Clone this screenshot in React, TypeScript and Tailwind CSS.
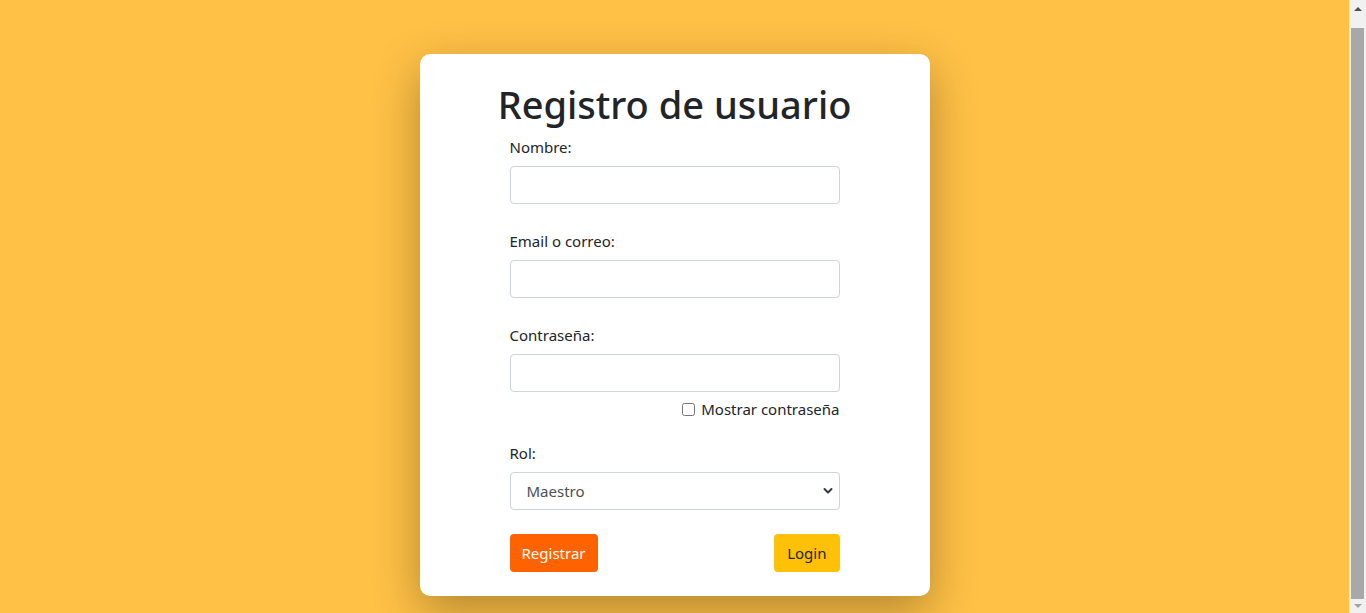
import React, { useState } from 'react';

export default function App() {
  const [showPass, setShowPass] = useState(false);

  return (
    <div className="flex h-screen overflow-hidden bg-[#ffc146] font-['Noto_Sans',sans-serif] text-[#212529]">
      <main className="flex-1 overflow-hidden pt-[54px] pb-[17px]">
        <div className="mx-auto w-[510px] rounded-[10px] bg-white px-[90px] pt-[26px] pb-6 shadow-[0_16px_48px_rgba(0,0,0,0.3)]">
          {/* Title */}
          <h1 className="text-center text-[38px] font-medium leading-[48px] whitespace-nowrap -mx-10">
            Registro de usuario
          </h1>

          <form className="mt-[7px]" onSubmit={(e) => e.preventDefault()}>
            <div className="mb-[25px]">
              <label className="block mb-[7px] text-[15px] leading-6">Nombre:</label>
              <input
                type="text"
                className="block w-full h-[38px] rounded-[4px] border border-[#ced4da] px-3 outline-none"
              />
            </div>

            <div className="mb-[25px]">
              <label className="block mb-[7px] text-[15px] leading-6">Email o correo:</label>
              <input
                type="email"
                className="block w-full h-[38px] rounded-[4px] border border-[#ced4da] px-3 outline-none"
              />
            </div>

            <div className="mb-5">
              <label className="block mb-[7px] text-[15px] leading-6">Contraseña:</label>
              <input
                type={showPass ? 'text' : 'password'}
                className="block w-full h-[38px] rounded-[4px] border border-[#ced4da] px-3 outline-none"
              />
              <div className="mt-[5px] flex justify-end">
                <label className="flex items-center gap-[6px] text-[15px] leading-6">
                  <input
                    type="checkbox"
                    checked={showPass}
                    onChange={() => setShowPass(!showPass)}
                    className="h-[13px] w-[13px]"
                  />
                  Mostrar contraseña
                </label>
              </div>
            </div>

            <div className="mb-6">
              <label className="block mb-[7px] text-[15px] leading-6">Rol:</label>
              <div className="relative">
                <select className="block w-full h-[38px] appearance-none rounded-[4px] border border-[#ced4da] bg-white pl-4 pr-9 text-[15px] text-[#495057] outline-none">
                  <option>Maestro</option>
                  <option>Alumno</option>
                </select>
                <svg
                  className="pointer-events-none absolute right-[7px] top-[15px]"
                  width="10"
                  height="8"
                  viewBox="0 0 10 8"
                >
                  <path d="M1.5 2l3.5 3.5L8.5 2" fill="none" stroke="#343a40" strokeWidth="2" strokeLinecap="round" strokeLinejoin="round" />
                </svg>
              </div>
            </div>

            <div className="flex items-center justify-between">
              <button
                type="submit"
                className="h-[38px] rounded-[4px] bg-[#ff6300] px-3 text-[15px] text-white"
              >
                Registrar
              </button>
              <button
                type="button"
                className="h-[38px] rounded-[4px] bg-[#ffc107] px-[13px] text-[15px] text-[#212529]"
              >
                Login
              </button>
            </div>
          </form>
        </div>
      </main>

      {/* window scrollbar */}
      <aside className="flex w-[17px] shrink-0 flex-col bg-[#f1f1f1]">
        <div className="flex h-[17px] items-center justify-center">
          <svg width="8" height="4" viewBox="0 0 8 4">
            <path d="M0 4L4 0L8 4Z" fill="#505050" />
          </svg>
        </div>
        <div className="mx-[2px] mt-[11px] flex-1 bg-[#a8a8a8]" />
        <div className="flex h-[14px] items-center justify-center">
          <svg width="8" height="4" viewBox="0 0 8 4">
            <path d="M0 0L8 0L4 4Z" fill="#a3a3a3" />
          </svg>
        </div>
      </aside>
    </div>
  );
}
